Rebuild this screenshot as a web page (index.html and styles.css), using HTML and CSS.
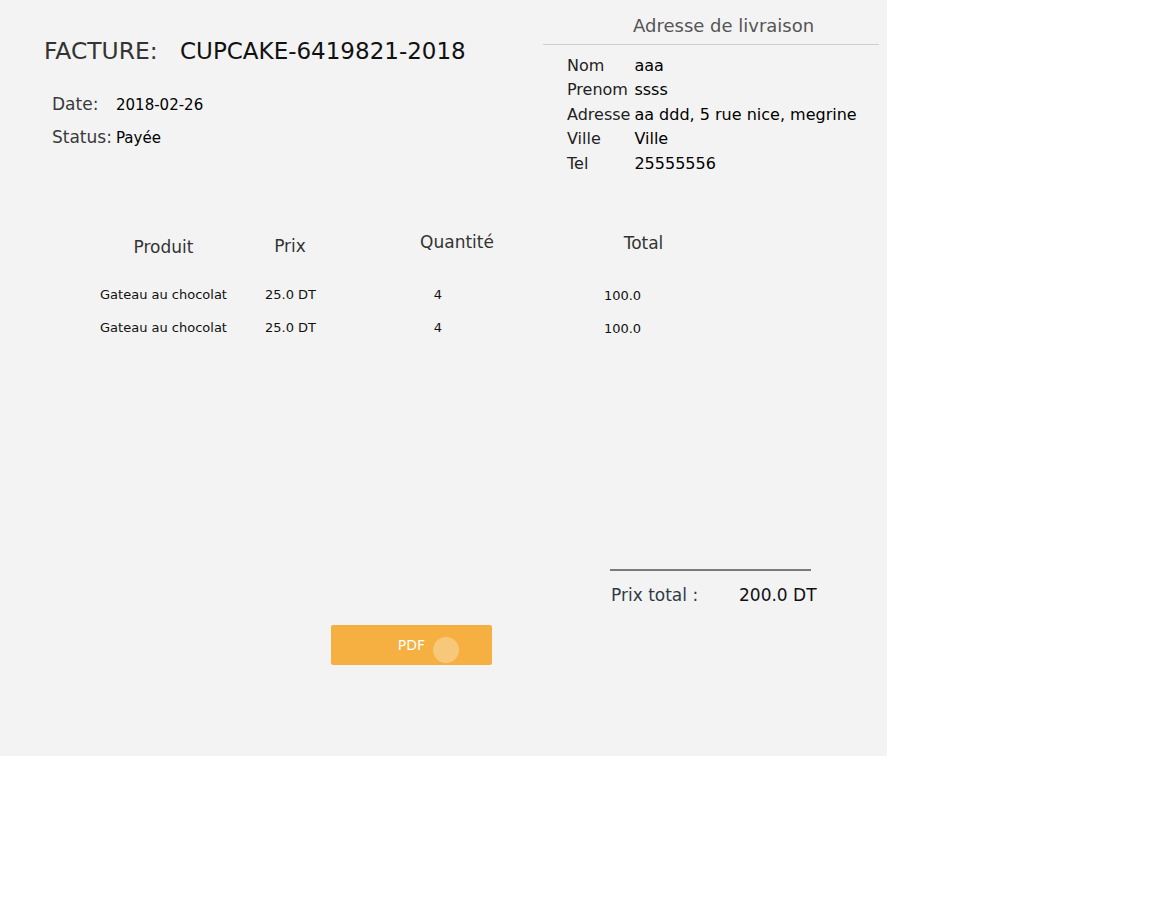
FILE: index.html
```html
<!DOCTYPE html>
<html lang="fr">
<head>
<meta charset="utf-8">
<title>Facture</title>
<link rel="stylesheet" href="styles.css">
</head>
<body>
<div class="page">
  <div class="top">
    <div class="left">
      <div class="title">
        <span class="title-label">FACTURE:</span>
        <span class="title-value">CUPCAKE-6419821-2018</span>
      </div>
      <div class="meta">
        <span class="meta-label">Date:</span>
        <span class="meta-value">2018-02-26</span>
        <span class="meta-label">Status:</span>
        <span class="meta-value">Payée</span>
      </div>
    </div>
    <div class="right">
      <div class="addr-title">Adresse de livraison</div>
      <div class="addr-rule"></div>
      <div class="addr">
        <span class="addr-label">Nom</span><span class="addr-value">aaa</span>
        <span class="addr-label">Prenom</span><span class="addr-value">ssss</span>
        <span class="addr-label">Adresse</span><span class="addr-value">aa ddd, 5 rue nice, megrine</span>
        <span class="addr-label">Ville</span><span class="addr-value">Ville</span>
        <span class="addr-label">Tel</span><span class="addr-value">25555556</span>
      </div>
    </div>
  </div>

  <div class="table">
    <div class="thead">
      <span class="th th-produit">Produit</span>
      <span class="th th-prix">Prix</span>
      <span class="th th-qte">Quantité</span>
      <span class="th th-total">Total</span>
    </div>
    <div class="tbody">
      <div class="tr">
        <span class="td">Gateau au chocolat</span>
        <span class="td">25.0 DT</span>
        <span class="td">4</span>
        <span class="td td-total">100.0</span>
      </div>
      <div class="tr">
        <span class="td">Gateau au chocolat</span>
        <span class="td">25.0 DT</span>
        <span class="td">4</span>
        <span class="td td-total">100.0</span>
      </div>
    </div>
  </div>

  <div class="summary">
    <div class="summary-rule"></div>
    <div class="summary-row">
      <span class="summary-label">Prix total :</span>
      <span class="summary-value">200.0 DT</span>
    </div>
  </div>

  <div class="actions">
    <button class="btn-pdf" type="button">PDF<span class="ripple"></span></button>
  </div>
</div>
</body>
</html>
```

FILE: styles.css
```css
* { box-sizing: border-box; }

html, body {
  margin: 0;
  padding: 0;
  background: #ffffff;
}

body {
  font-family: "DejaVu Sans", "Liberation Sans", sans-serif;
  color: #000;
}

.page {
  width: 887px;
  height: 756px;
  background: #f3f3f3;
  overflow: hidden;
}

/* ---------- top section ---------- */
.top {
  display: flex;
  align-items: flex-start;
  height: 175px;
}

.left {
  width: 543px;
  padding: 38px 0 0 44px;
}

.title {
  display: grid;
  grid-template-columns: 136px auto;
  align-items: baseline;
  line-height: 27px;
}

.title-label {
  font-size: 23.4px;
  color: #333;
}

.title-value {
  font-size: 23px;
  color: #111;
}

.meta {
  margin: 29px 0 0 8px;
  display: grid;
  grid-template-columns: 64px auto;
  align-items: baseline;
  row-gap: 12.5px;
}

.meta-label {
  font-size: 17px;
  color: #3a3a3a;
}

.meta-value {
  font-size: 15px;
  color: #000;
}

.right {
  width: 336px;
  padding-top: 15px;
}

.addr-title {
  font-size: 18px;
  line-height: 21px;
  color: #555;
  padding-left: 90px;
}

.addr-rule {
  margin-top: 8px;
  height: 1px;
  background: #cfcfcf;
}

.addr {
  margin-top: 9px;
  padding-left: 24px;
  display: grid;
  grid-template-columns: auto 1fr;
  column-gap: 4px;
  font-size: 16px;
  line-height: 24.4px;
}

.addr-label { color: #222; }
.addr-value { color: #000; }

/* ---------- table ---------- */
.table {
  margin-top: 57px;
  padding-left: 100px;
}

.thead {
  display: grid;
  grid-template-columns: 127px 126px 208px 165px;
  align-items: start;
  font-size: 17px;
  color: #333;
}

.th { text-align: center; }
.th-produit { padding-top: 5px; }
.th-prix { padding-top: 4px; }
.th-qte { padding-top: 0; }
.th-total { padding-top: 1px; }

.tbody {
  margin-top: 21px;
}

.tr {
  display: grid;
  grid-template-columns: 127px 127px 168px 201px;
  font-size: 13px;
  line-height: 33px;
  color: #111;
}

.td { text-align: center; white-space: nowrap; }
.td-total { position: relative; top: 1px; }

/* ---------- summary ---------- */
.summary {
  margin: 225px 0 0 610px;
  width: 220px;
}

.summary-rule {
  width: 201px;
  height: 2px;
  background: #7a7a7a;
}

.summary-row {
  margin-top: 14px;
  display: grid;
  grid-template-columns: 128px auto;
  padding-left: 1px;
  font-size: 17px;
}

.summary-label { color: #2f3a48; }
.summary-value { color: #111; }

/* ---------- actions ---------- */
.actions {
  margin: 20px 0 0 331px;
}

.btn-pdf {
  position: relative;
  display: block;
  width: 161px;
  height: 40px;
  padding: 0;
  border: none;
  border-radius: 2px;
  background: #f5b041;
  color: #fff;
  font-family: "DejaVu Sans", "Liberation Sans", sans-serif;
  font-size: 14px;
  line-height: 40px;
  text-align: center;
  overflow: hidden;
}

.ripple {
  position: absolute;
  left: 102px;
  top: 12px;
  width: 26px;
  height: 26px;
  border-radius: 50%;
  background: rgba(255, 255, 255, 0.3);
}
```
